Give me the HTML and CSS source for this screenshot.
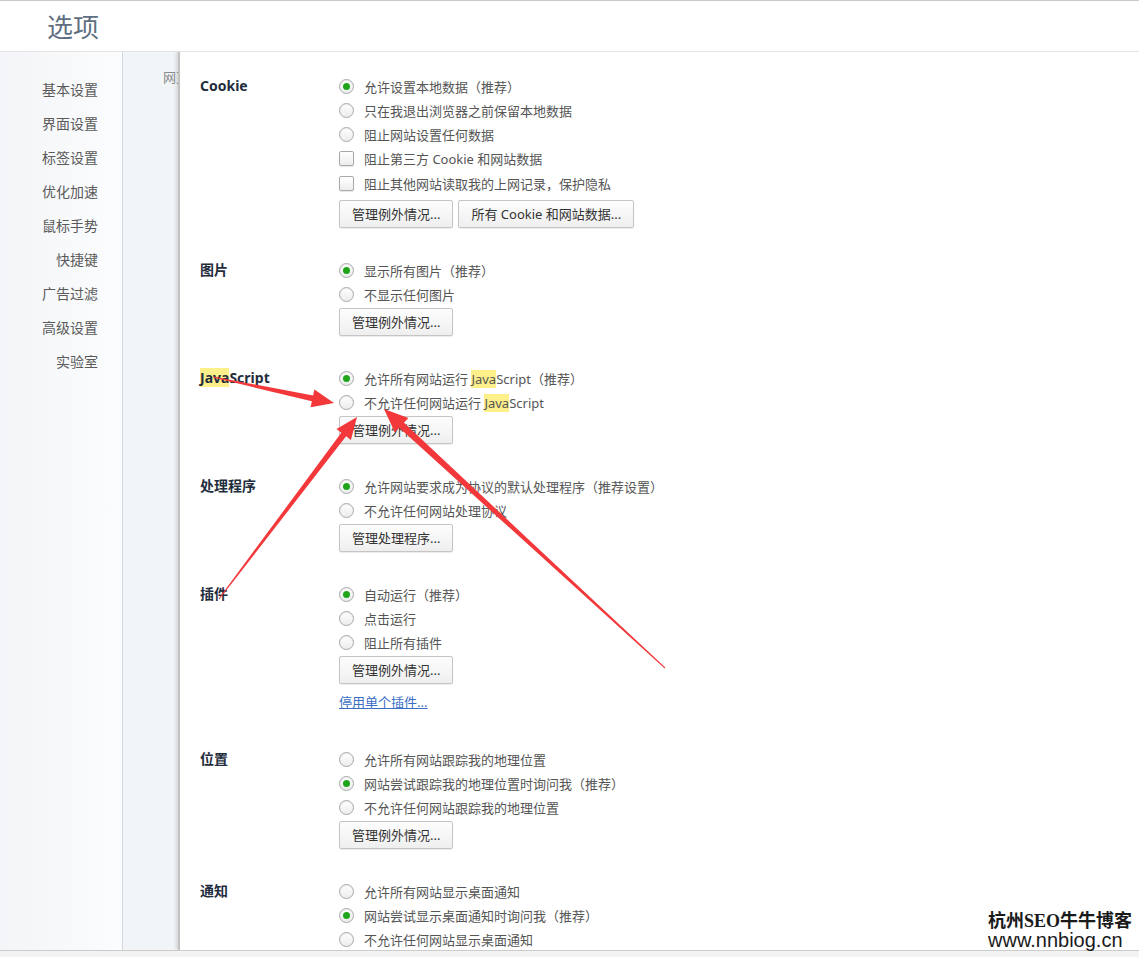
FILE: index.html
```html
<!DOCTYPE html>
<html lang="zh-CN">
<head>
<meta charset="utf-8">
<title>选项</title>
<link rel="stylesheet" href="styles.css">
</head>
<body>
<div class="page">
  <header class="header"><h1 class="title">选项</h1></header>
  <div class="main">
    <nav class="sidebar">
      <a class="nav-item">基本设置</a>
      <a class="nav-item">界面设置</a>
      <a class="nav-item">标签设置</a>
      <a class="nav-item">优化加速</a>
      <a class="nav-item">鼠标手势</a>
      <a class="nav-item">快捷键</a>
      <a class="nav-item">广告过滤</a>
      <a class="nav-item">高级设置</a>
      <a class="nav-item">实验室</a>
    </nav>
    <div class="strip"><span class="strip-text">网页</span></div>
    <div class="panel">
      <section class="section">
        <div class="label">Cookie</div>
        <div class="opts">
          <div class="opt"><span class="radio on"></span><span>允许设置本地数据（推荐）</span></div>
          <div class="opt"><span class="radio"></span><span>只在我退出浏览器之前保留本地数据</span></div>
          <div class="opt"><span class="radio"></span><span>阻止网站设置任何数据</span></div>
          <div class="opt tall"><span class="check"></span><span>阻止第三方 Cookie 和网站数据</span></div>
          <div class="opt tall"><span class="check"></span><span>阻止其他网站读取我的上网记录，保护隐私</span></div>
          <div class="btns first"><button class="btn">管理例外情况...</button><button class="btn">所有 Cookie 和网站数据...</button></div>
        </div>
      </section>
      <section class="section">
        <div class="label">图片</div>
        <div class="opts">
          <div class="opt"><span class="radio on"></span><span>显示所有图片（推荐）</span></div>
          <div class="opt"><span class="radio"></span><span>不显示任何图片</span></div>
          <div class="btns"><button class="btn">管理例外情况...</button></div>
        </div>
      </section>
      <section class="section">
        <div class="label"><span class="hl">Java</span>Script</div>
        <div class="opts">
          <div class="opt"><span class="radio on"></span><span>允许所有网站运行 <span class="hl">Java</span>Script（推荐）</span></div>
          <div class="opt"><span class="radio"></span><span>不允许任何网站运行 <span class="hl">Java</span>Script</span></div>
          <div class="btns"><button class="btn">管理例外情况...</button></div>
        </div>
      </section>
      <section class="section">
        <div class="label">处理程序</div>
        <div class="opts">
          <div class="opt"><span class="radio on"></span><span>允许网站要求成为协议的默认处理程序（推荐设置）</span></div>
          <div class="opt"><span class="radio"></span><span>不允许任何网站处理协议</span></div>
          <div class="btns"><button class="btn">管理处理程序...</button></div>
        </div>
      </section>
      <section class="section plugins">
        <div class="label">插件</div>
        <div class="opts">
          <div class="opt"><span class="radio on"></span><span>自动运行（推荐）</span></div>
          <div class="opt"><span class="radio"></span><span>点击运行</span></div>
          <div class="opt"><span class="radio"></span><span>阻止所有插件</span></div>
          <div class="btns"><button class="btn">管理例外情况...</button></div>
          <a class="link">停用单个插件...</a>
        </div>
      </section>
      <section class="section">
        <div class="label">位置</div>
        <div class="opts">
          <div class="opt"><span class="radio"></span><span>允许所有网站跟踪我的地理位置</span></div>
          <div class="opt"><span class="radio on"></span><span>网站尝试跟踪我的地理位置时询问我（推荐）</span></div>
          <div class="opt"><span class="radio"></span><span>不允许任何网站跟踪我的地理位置</span></div>
          <div class="btns"><button class="btn">管理例外情况...</button></div>
        </div>
      </section>
      <section class="section">
        <div class="label">通知</div>
        <div class="opts">
          <div class="opt"><span class="radio"></span><span>允许所有网站显示桌面通知</span></div>
          <div class="opt"><span class="radio on"></span><span>网站尝试显示桌面通知时询问我（推荐）</span></div>
          <div class="opt"><span class="radio"></span><span>不允许任何网站显示桌面通知</span></div>
        </div>
      </section>
    </div>
  </div>
  <div class="footer"></div>

  <svg class="arrows" width="1139" height="957" viewBox="0 0 1139 957">
    <polygon points="213.1,376.5 313.1,395.5 314.4,389.6 334,403 310.6,407.2 311.9,401.3 212.9,377.5"/>
    <polygon points="218.6,598.7 341.3,432.7 336.5,429.1 357,417 350.9,440.0 346.1,436.3 219.4,599.3"/>
    <polygon points="665.3,667.6 404.0,422.7 408.4,417.9 384,409 394.9,432.6 399.3,427.8 664.7,668.4"/>
  </svg>

  <div class="watermark">
    <div class="wm-cn">杭州SEO牛牛博客</div>
    <div class="wm-url">www.nnbiog.cn</div>
  </div>
</div>
</body>
</html>
```

FILE: styles.css
```css
* { box-sizing: border-box; }
html, body { margin: 0; padding: 0; }
body {
  font-family: "Noto Sans", "Noto Sans CJK SC", sans-serif;
  background: #fff;
  color: #555;
}
.page {
  position: relative;
  width: 1139px;
  height: 957px;
  display: flex;
  flex-direction: column;
  border-top: 1px solid #c9c9c9;
  overflow: hidden;
}
.header {
  height: 51px;
  border-bottom: 1px solid #e4e4e4;
  flex: none;
}
.title {
  margin: 0;
  padding-left: 47px;
  font-family: "Noto Sans CJK SC", sans-serif;
  font-weight: normal;
  font-size: 26px;
  line-height: 50px;
  color: #5f6f80;
}
.main {
  height: 899px;
  flex: none;
  display: flex;
  border-bottom: 1px solid #cbcbcb;
  overflow: hidden;
}
.sidebar {
  width: 122px;
  flex: none;
  display: flex;
  flex-direction: column;
  align-items: flex-end;
  padding: 20px 24px 0 0;
  background: linear-gradient(to right, #f3f5f8, #fbfcfd);
}
.nav-item {
  display: block;
  height: 34px;
  line-height: 34px;
  font-family: "Noto Sans CJK SC", sans-serif;
  font-size: 14px;
  color: #5a5a5a;
  white-space: nowrap;
}
.strip {
  width: 56px;
  flex: none;
  border-left: 1px solid #d3d8de;
  background: #f2f5f8;
  overflow: hidden;
  padding: 17px 0 0 40px;
}
.strip-text {
  display: block;
  white-space: nowrap;
  font-family: "Noto Sans CJK SC", sans-serif;
  font-size: 13px;
  line-height: 16px;
  color: #8a8a8a;
}
.panel {
  flex: 1;
  background: #fff;
  border-left: 2px solid #c2c2c2;
  box-shadow: -2px 0 3px rgba(0, 0, 0, 0.12);
  padding: 22px 0 0 20px;
  overflow: hidden;
  z-index: 1;
}
.section {
  display: grid;
  grid-template-columns: 139px 1fr;
  padding-bottom: 30px;
}
.section.plugins { padding-bottom: 33px; }
.label {
  font-weight: bold;
  font-size: 14px;
  line-height: 24px;
  color: #1f2d3d;
}
.opts {
  display: flex;
  flex-direction: column;
  align-items: flex-start;
}
.opt {
  height: 24px;
  display: flex;
  align-items: center;
  gap: 10px;
  font-size: 13px;
  color: #555;
  white-space: pre;
}
.opt.tall { height: 25px; }
.hl { background: #fdef8a; }
.radio {
  width: 15px;
  height: 15px;
  flex: none;
  border-radius: 50%;
  border: 1px solid #a9a9a9;
  background: linear-gradient(#ffffff, #ececec);
  box-shadow: inset 0 1px 1px rgba(0, 0, 0, 0.08);
  display: flex;
  align-items: center;
  justify-content: center;
}
.radio.on::after {
  content: "";
  width: 7px;
  height: 7px;
  border-radius: 50%;
  background: #1fa51a;
}
.check {
  width: 15px;
  height: 15px;
  flex: none;
  border-radius: 2px;
  border: 1px solid #a9a9a9;
  background: linear-gradient(#ffffff, #ededed);
  box-shadow: 0 1px 1px rgba(0, 0, 0, 0.1);
}
.btns {
  display: flex;
  gap: 5px;
  margin-top: 2px;
}
.btns.first { margin-top: 4px; }
.btn {
  height: 28px;
  padding: 0 12px;
  border: 1px solid #c5c5c5;
  border-radius: 2px;
  background: linear-gradient(#fdfdfd, #efefef);
  box-shadow: 0 1px 1px rgba(0, 0, 0, 0.08);
  font-family: "Noto Sans", "Noto Sans CJK SC", sans-serif;
  font-size: 13px;
  color: #333;
  line-height: 26px;
}
.link {
  display: block;
  margin-top: 6px;
  height: 24px;
  line-height: 24px;
  font-size: 13px;
  color: #3a6ec5;
  text-decoration: underline;
}
.footer {
  flex: 1;
  background: #f3f3f3;
}
.arrows {
  position: absolute;
  left: 0;
  top: -1px;
  pointer-events: none;
  z-index: 5;
}
.arrows polygon { fill: #f2383a; }
.watermark {
  position: absolute;
  left: 988px;
  top: 910px;
  z-index: 6;
  color: #1a1a1a;
}
.wm-cn {
  font-family: "Liberation Serif", "Noto Sans CJK SC", serif;
  font-weight: bold;
  font-size: 18px;
  line-height: 20px;
}
.wm-url {
  font-family: "Liberation Sans", sans-serif;
  font-size: 20px;
  line-height: 18px;
}
```
